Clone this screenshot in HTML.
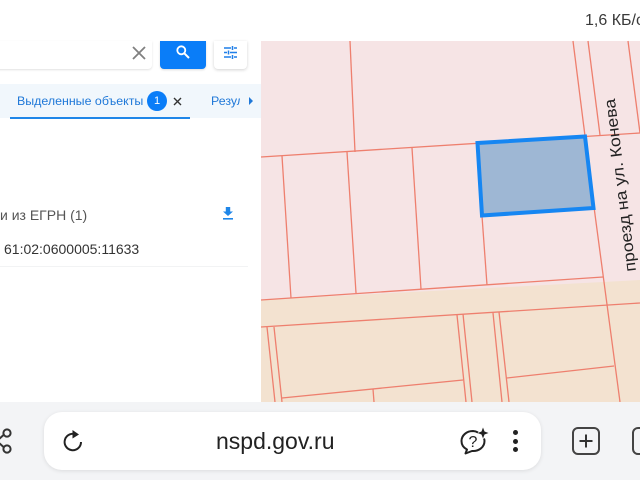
<!DOCTYPE html>
<html><head><meta charset="utf-8">
<style>
html,body{margin:0;padding:0;background:#fff}
#r{position:relative;width:640px;height:480px;overflow:hidden;background:#fff;font-family:"Liberation Sans",sans-serif}
.a{position:absolute;white-space:nowrap}
</style></head><body><div id="r">
<div class="a" style="left:585px;top:12px;font-size:16px;color:#3a3a3a">1,6 КБ/с</div>

<!-- search -->
<div class="a" style="left:-10px;top:41px;width:162px;height:28px;background:#fff;border-radius:0 0 4px 4px;box-shadow:0 1px 2px rgba(0,0,0,.12)"></div>
<svg class="a" style="left:131px;top:45px" width="16" height="16" viewBox="0 0 16 16"><path d="M2 2L14 14M14 2L2 14" stroke="#808080" stroke-width="1.8" fill="none"/></svg>
<div class="a" style="left:160px;top:41px;width:46px;height:28px;background:#0a7df8;border-radius:0 0 4px 4px;box-shadow:0 1px 2px rgba(0,0,0,.15)"></div>
<svg class="a" style="left:175px;top:44px" width="16" height="16" viewBox="0 0 16 16"><circle cx="6.3" cy="6.3" r="4" stroke="#fff" stroke-width="1.8" fill="none"/><path d="M9.3 9.3L14 14" stroke="#fff" stroke-width="2" fill="none"/></svg>
<div class="a" style="left:214px;top:41px;width:33px;height:28px;background:#fff;border-radius:0 0 4px 4px;box-shadow:0 1px 3px rgba(0,0,0,.18)"></div>
<svg class="a" style="left:223px;top:45px" width="15" height="15" viewBox="0 0 15 15"><path d="M1 3H8M11 3H14M9.5 1V5M1 7.5H4M7 7.5H14M5.5 5.5V9.5M1 12H8M11 12H14M9.5 10V14" stroke="#1f7fe8" stroke-width="1.5" fill="none"/></svg>

<!-- tabs -->
<div class="a" style="left:0;top:84px;width:261px;height:34px;background:#f1f7fc"></div>
<div class="a" style="left:17px;top:94px;font-size:12.4px;color:#1f78d8">Выделенные объекты</div>
<div class="a" style="left:147px;top:91px;width:20px;height:20px;border-radius:50%;background:#0a7df8;color:#fff;font-size:11px;line-height:20px;text-align:center">1</div>
<svg class="a" style="left:173px;top:97px" width="9" height="9" viewBox="0 0 9 9"><path d="M1 1L8 8M8 1L1 8" stroke="#333" stroke-width="1.4" fill="none"/></svg>
<div class="a" style="left:10px;top:116.5px;width:180px;height:2px;background:#1f86e8"></div>
<div class="a" style="left:211px;top:94px;width:29px;overflow:hidden;font-size:12.4px;color:#1f78d8">Результаты</div>
<svg class="a" style="left:248px;top:97px" width="6" height="8" viewBox="0 0 6 8"><path d="M1 0L5 4L1 8Z" fill="#1f78d8"/></svg>

<!-- list -->
<div class="a" style="left:0;top:207px;font-size:14px;color:#555">и из ЕГРН (1)</div>
<svg class="a" style="left:221px;top:206px" width="14" height="15" viewBox="0 0 14 15"><path d="M4.8 1H9.2V5.5H12L7 10L2 5.5H4.8Z" fill="#1f86e8"/><rect x="2" y="12" width="10" height="1.6" fill="#1f86e8"/></svg>
<div class="a" style="left:4px;top:241px;font-size:14px;color:#333">61:02:0600005:11633</div>
<div class="a" style="left:0;top:266px;width:248px;height:1px;background:#f2f3f4"></div>

<!-- map -->
<svg class="a" style="left:0;top:0" width="640" height="480" viewBox="0 0 640 480">
<rect x="261" y="41" width="379" height="361" fill="#f6e4e5"/>
<path d="M261 300L640 280V402H261Z" fill="#f3e2d0"/>
<g stroke="#ee7f6e" stroke-width="1.3" fill="none">
<path d="M261 157L640 133"/>
<path d="M350 41L355 152"/>
<path d="M282 156L291 298"/>
<path d="M347 152L356 293"/>
<path d="M412 148L421 289"/>
<path d="M482 216L487 285"/>
<path d="M573 41L585 136"/>
<path d="M588 41L600 135"/>
<path d="M628 41L640 133"/>
<path d="M594 207L620 402"/>
<path d="M261 300L603 277"/>
<path d="M261 327L640 303"/>
<path d="M267 327L275 402"/>
<path d="M274 327L282 402"/>
<path d="M457 315L466 402"/>
<path d="M463 314L472 402"/>
<path d="M493 313L502 402"/>
<path d="M499 312L509 402"/>
<path d="M282 398L463 380"/>
<path d="M373 389L374 402"/>
<path d="M507 378L614 366"/>
</g>
<path d="M477.5 143L585 136.5L593.5 208L482 215.5Z" fill="#9eb7d4" stroke="#1686f2" stroke-width="4"/>
<text transform="translate(636 271) rotate(-97)" font-family="Liberation Sans, sans-serif" font-size="16" textLength="174" lengthAdjust="spacingAndGlyphs" fill="#222">проезд на ул. Конева</text>
</svg>

<!-- bottom bar -->
<div class="a" style="left:0;top:402px;width:640px;height:78px;background:#f3f4f6"></div>
<div class="a" style="left:44px;top:412px;width:497px;height:58px;background:#fff;border-radius:18px;box-shadow:0 1px 4px rgba(0,0,0,.1)"></div>
<div class="a" style="left:216px;top:428px;font-size:23px;color:#222">nspd.gov.ru</div>

<svg class="a" style="left:0;top:424px" width="16" height="34" viewBox="0 0 16 34"><circle cx="7" cy="9" r="3.6" fill="none" stroke="#333" stroke-width="2"/><circle cx="7" cy="25" r="3.6" fill="none" stroke="#333" stroke-width="2"/><path d="M3.5 11L-2 16M3.5 23L-2 18" stroke="#333" stroke-width="2" fill="none"/></svg>

<svg class="a" style="left:61px;top:429px" width="24" height="24" viewBox="0 0 24 24"><path d="M15.5 5.7A8.2 8.2 0 1 0 20 13" fill="none" stroke="#222" stroke-width="2"/><path d="M11.5 1L18 5.5L11.5 9.5Z" fill="#222"/></svg>

<svg class="a" style="left:459px;top:427px" width="30" height="30" viewBox="0 0 30 30"><path d="M19 5.5A11 11 0 0 0 14 4C7.5 4 2.5 8.5 2.5 14C2.5 18 5 21 8 22.5L6.5 26.5L13 24C20 24.5 25.5 20 25.5 14C25.5 13 25.4 12.5 25 11.5" fill="none" stroke="#222" stroke-width="2" stroke-linejoin="round"/><text x="14" y="20" text-anchor="middle" font-family="Liberation Sans, sans-serif" font-size="16" fill="#222">?</text><path d="M24 0.5L25.5 4.5L29.5 6L25.5 7.5L24 11.5L22.5 7.5L18.5 6L22.5 4.5Z" fill="#222"/></svg>

<div class="a" style="left:513px;top:430px;width:5px;height:5px;border-radius:50%;background:#222"></div>
<div class="a" style="left:513px;top:439px;width:5px;height:5px;border-radius:50%;background:#222"></div>
<div class="a" style="left:513px;top:447px;width:5px;height:5px;border-radius:50%;background:#222"></div>

<div class="a" style="left:572px;top:427px;width:24px;height:24px;border:2px solid #444;border-radius:6px"></div>
<svg class="a" style="left:578px;top:433px" width="16" height="16" viewBox="0 0 16 16"><path d="M8 1.5V14.5M1.5 8H14.5" stroke="#333" stroke-width="2" fill="none"/></svg>
<div class="a" style="left:632px;top:427px;width:24px;height:24px;border:2px solid #444;border-radius:6px"></div>
</div></body></html>
